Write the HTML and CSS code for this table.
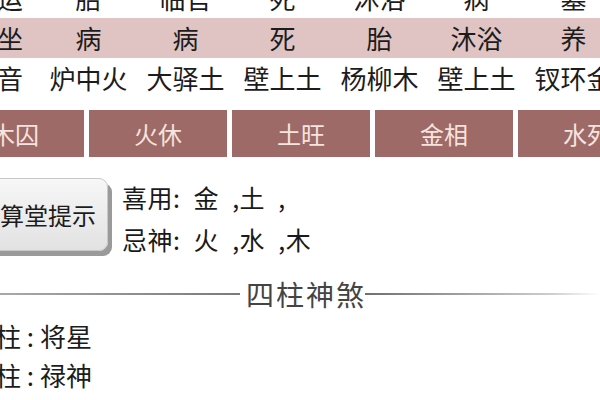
FILE: index.html
```html
<!DOCTYPE html>
<html lang="zh">
<head>
<meta charset="utf-8">
<link rel="stylesheet" href="styles.css">
</head>
<body>
<div class="page">
  <div class="table">
    <div class="row">
      <div class="cell label">星运</div>
      <div class="cell">胎</div>
      <div class="cell">临官</div>
      <div class="cell">死</div>
      <div class="cell">沐浴</div>
      <div class="cell">病</div>
      <div class="cell">墓</div>
    </div>
    <div class="row pink">
      <div class="cell label">自坐</div>
      <div class="cell">病</div>
      <div class="cell">病</div>
      <div class="cell">死</div>
      <div class="cell">胎</div>
      <div class="cell">沐浴</div>
      <div class="cell">养</div>
    </div>
    <div class="row">
      <div class="cell label">纳音</div>
      <div class="cell">炉中火</div>
      <div class="cell">大驿土</div>
      <div class="cell">壁上土</div>
      <div class="cell">杨柳木</div>
      <div class="cell">壁上土</div>
      <div class="cell">钗环金</div>
    </div>
  </div>

  <div class="tabs">
    <div class="tab">木囚</div>
    <div class="tab">火休</div>
    <div class="tab">土旺</div>
    <div class="tab">金相</div>
    <div class="tab">水死</div>
  </div>

  <div class="tip">
    <div class="tip-btn">算堂提示</div>
    <div class="tip-text">
      <div class="tip-line">喜用: 金 ,土 ,</div>
      <div class="tip-line">忌神: 火 ,水 ,木</div>
    </div>
  </div>

  <div class="divider">
    <div class="line line-left"></div>
    <div class="divider-title">四柱神煞</div>
    <div class="line line-right"></div>
  </div>

  <div class="shensha">
    <div class="ss-line">年柱 : 将星</div>
    <div class="ss-line">月柱 : 禄神</div>
  </div>
</div>
</body>
</html>
```

FILE: styles.css
```css
html, body {
  margin: 0;
  padding: 0;
  background: #ffffff;
}
body {
  width: 600px;
  height: 400px;
  overflow: hidden;
  font-family: "Noto Sans CJK SC", "Noto Sans", sans-serif;
  color: #222222;
}
.page {
  width: 600px;
}
.table {
  margin-top: -22px;
}
.row {
  display: grid;
  grid-template-columns: 86px repeat(6, 97px);
  margin-left: -46px;
  width: 700px;
  height: 40px;
  align-items: center;
}
.row.pink {
  background: #dfc4c3;
}
.cell {
  text-align: center;
  font-size: 26px;
  line-height: 40px;
  white-space: nowrap;
  color: #1c1c1c;
}
.tabs {
  display: flex;
  gap: 5px;
  margin-top: 12px;
  margin-left: -54px;
}
.tab {
  flex: 0 0 138px;
  height: 47px;
  background: #9d6a67;
  color: #f6e4df;
  font-size: 24px;
  line-height: 47px;
  text-align: center;
}
.tip {
  display: flex;
  align-items: flex-start;
  margin-top: 21px;
}
.tip-btn {
  margin-left: -12px;
  width: 120px;
  height: 73px;
  box-sizing: border-box;
  border: 1px solid #c8c8c8;
  border-radius: 9px;
  background: linear-gradient(#f7f7f7, #e2e2e2);
  box-shadow: 4px 5px 0 #9a9a9a;
  font-size: 24px;
  line-height: 71px;
  text-align: center;
  color: #1c1c1c;
}
.tip-text {
  margin-left: 14px;
  margin-top: -2px;
}
.tip-line {
  font-size: 25px;
  line-height: 42px;
  color: #1a1a1a;
  white-space: nowrap;
  word-spacing: 7px;
  letter-spacing: 0.5px;
}
.divider {
  display: flex;
  align-items: center;
  margin-top: 16px;
  height: 36px;
}
.line {
  height: 2px;
}
.line-left {
  flex: 0 0 240px;
  background: linear-gradient(90deg, #a9a9a9, #7a7a7a);
}
.line-right {
  flex: 1;
  background: linear-gradient(90deg, #6f6f6f, #cfcfcf 80%, #ffffff);
}
.divider-title {
  font-size: 28px;
  letter-spacing: 2px;
  padding-left: 6px;
  margin-right: -1px;
  color: #444444;
  line-height: 36px;
}
.shensha {
  margin-top: 4px;
}
.ss-line {
  font-size: 26px;
  line-height: 39px;
  margin-left: -31px;
  white-space: nowrap;
  color: #1c1c1c;
}
```
